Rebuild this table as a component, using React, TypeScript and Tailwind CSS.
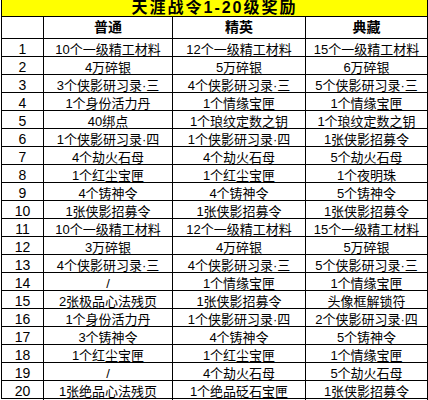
import React from "react"

const rows: [string, string, string][] = [
  ["10个一级精工材料", "12个一级精工材料", "15个一级精工材料"],
  ["4万碎银", "5万碎银", "6万碎银"],
  ["3个侠影研习录·三", "4个侠影研习录·三", "5个侠影研习录·三"],
  ["1个身份活力丹", "1个情缘宝匣", "1个情缘宝匣"],
  ["40绑点", "1个琅纹定数之钥", "1个琅纹定数之钥"],
  ["1个侠影研习录·四", "1个侠影研习录·四", "1张侠影招募令"],
  ["4个劫火石母", "4个劫火石母", "5个劫火石母"],
  ["1个红尘宝匣", "1个红尘宝匣", "1个夜明珠"],
  ["4个铸神令", "4个铸神令", "5个铸神令"],
  ["1张侠影招募令", "1张侠影招募令", "1张侠影招募令"],
  ["10个一级精工材料", "12个一级精工材料", "15个一级精工材料"],
  ["3万碎银", "4万碎银", "5万碎银"],
  ["4个侠影研习录·三", "4个侠影研习录·三", "5个侠影研习录·三"],
  ["/", "1个情缘宝匣", "1个情缘宝匣"],
  ["2张极品心法残页", "1张侠影招募令", "头像框解锁符"],
  ["1个身份活力丹", "1个侠影研习录·四", "2个侠影研习录·四"],
  ["3个铸神令", "4个铸神令", "5个铸神令"],
  ["1个红尘宝匣", "1个红尘宝匣", "1个情缘宝匣"],
  ["/", "4个劫火石母", "5个劫火石母"],
  ["1张绝品心法残页", "1个绝品砭石宝匣", "1张侠影招募令"],
]

const cols = "grid grid-cols-[42px_129px_133px_122px]"
const cell = "flex items-center justify-center border-r border-black whitespace-nowrap"

export default function App() {
  return (
    <div
      className="w-[428px] h-[400px] bg-white overflow-hidden pl-px text-black"
      style={{ fontFamily: '"Liberation Sans", "Noto Sans CJK SC", sans-serif' }}
    >
      <div className="border-l border-black">
        {/* title */}
        <div className="h-[17px] bg-[#ffff00] border-b border-r border-black flex items-center justify-center text-[16px] leading-[16px] font-bold tracking-[2px]">
          天涯战令1-20级奖励
        </div>
        {/* header */}
        <div className={`${cols} h-[22px] border-b border-black text-[14px] font-bold`}>
          <div className={cell}></div>
          <div className={cell}>普通</div>
          <div className={cell}>精英</div>
          <div className={cell}>典藏</div>
        </div>
        {rows.map((r, i) => (
          <div key={i} className={`${cols} h-[18px] border-b border-black`}>
            <div className={`${cell} text-[14px]`}>{i + 1}</div>
            {r.map((c, j) => (
              <div key={j} className={`${cell} text-[13px]`}>
                {c}
              </div>
            ))}
          </div>
        ))}
      </div>
    </div>
  )
}
